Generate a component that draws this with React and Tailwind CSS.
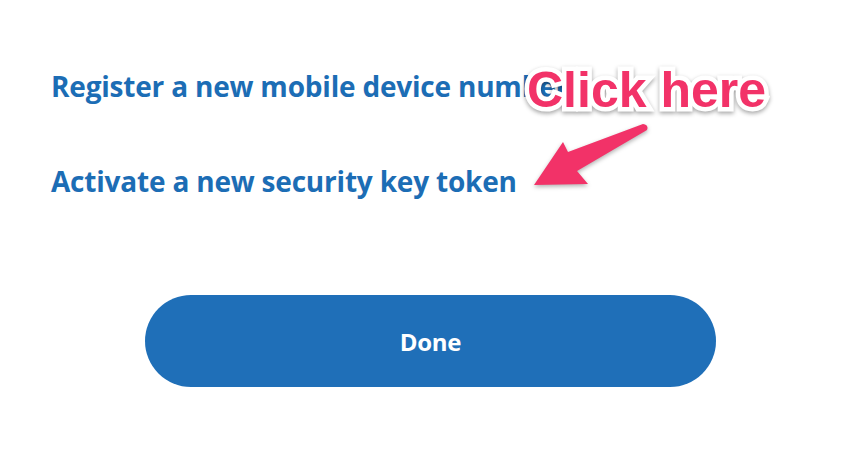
import React from "react";

export default function App() {
  return (
    <div className="relative w-[846px] h-[458px] bg-white overflow-hidden">
      <div className="flex flex-col pl-[51px] pt-[67px] font-['Open_Sans',sans-serif] font-bold text-[#1c6db5]">
        <a className="text-[28px] leading-[38px] tracking-[-0.2px] whitespace-nowrap">Register a new mobile device number</a>
        <a className="mt-[57px] text-[28px] leading-[38px] tracking-[-0.2px] whitespace-nowrap">Activate a new security key token</a>
      </div>
      <div className="flex justify-center pl-[15px] mt-[95px]">
        <button className="w-[571px] h-[92px] rounded-full bg-[#1f6fb8] text-white font-['Open_Sans',sans-serif] font-bold text-[24px] tracking-[-0.3px] pt-[2px]">
          Done
        </button>
      </div>

      <div className="absolute left-[527px] top-[59px] font-['Liberation_Sans',sans-serif] font-bold text-[50px] leading-[62px] text-[#f23268] [paint-order:stroke_fill] [-webkit-text-stroke:9px_white] drop-shadow-[0_2px_2px_rgba(0,0,0,0.35)]">
        Click here
      </div>
      <svg className="absolute left-0 top-0 drop-shadow-[0_2px_2px_rgba(0,0,0,0.3)]" width="846" height="458">
        <path
          d="M534 185 L563 142 L568 152 L643 124 Q649 125 647 130 L577 171 L588 184 Z"
          fill="#f23268"
        />
      </svg>
    </div>
  );
}
